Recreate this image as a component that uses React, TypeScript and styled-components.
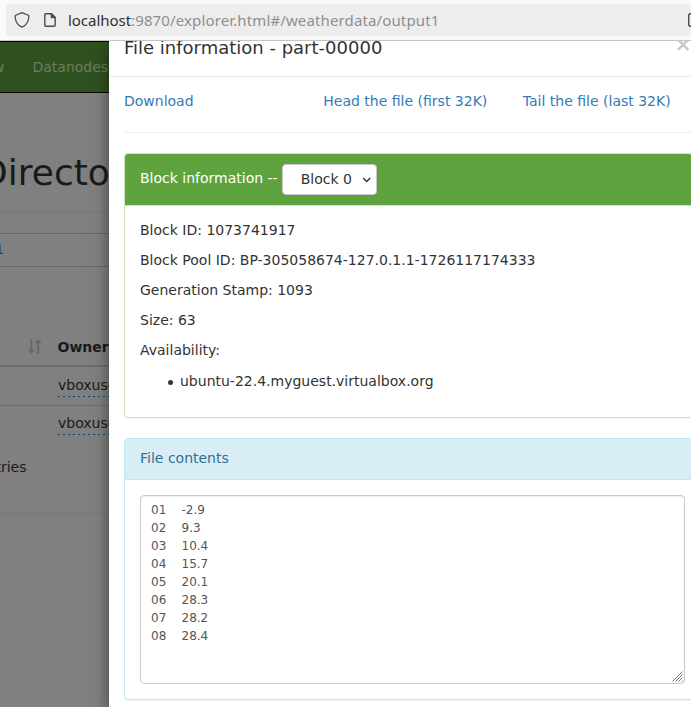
import React from "react";
import styled, { createGlobalStyle } from "styled-components";

const GlobalStyle = createGlobalStyle`
  * { box-sizing: border-box; }
  body {
    margin: 0;
    overflow: hidden;
    font: 14px/20px "DejaVu Sans", sans-serif;
    color: #333;
    background: #fff;
  }
`;

const Window = styled.div`
  width: 691px;
  height: 707px;
  display: flex;
  flex-direction: column;
  overflow: hidden;
`;

const Toolbar = styled.header`
  flex: 0 0 41px;
  height: 41px;
  padding: 4px 0 4px 6px;
  background: #fafafa;
  border-bottom: 1px solid #c3c3c3;
`;

const AddressBar = styled.div`
  height: 32px;
  padding-left: 8px;
  display: flex;
  align-items: center;
  background: #ededed;
  border-radius: 4px 0 0 4px;
  overflow: hidden;
  svg { flex: none; }
`;

const SiteIcons = styled.div`
  display: flex;
  flex: none;
  align-items: center;
  gap: 14px;
`;

const Url = styled.div`
  width: 620px;
  margin: 0 0 0 12px;
  flex: none;
  font: 15px/20px "Noto Sans", sans-serif;
  letter-spacing: 0.13px;
  white-space: nowrap;
  color: #8f8f8f;
  b { font-weight: 400; color: #303030; letter-spacing: -0.04px; }
`;

const Viewport = styled.main`
  flex: 1;
  min-height: 0;
  display: flex;
  overflow: hidden;
`;

const Page = styled.div`
  flex: 0 0 109px;
  background: #808080;
  color: #1a1a1a;
  overflow: hidden;
  white-space: nowrap;
`;

const Nav = styled.nav`
  height: 52px;
  display: flex;
  gap: 28px;
  line-height: 50px;
  color: #6b7d62;
  background: #2f511f;
  border: solid #050505;
  border-width: 1px 0;
`;

const Clipped = styled.span<{ $shift: number }>`
  display: block;
  margin-left: ${(p) => p.$shift}px;
`;

const Title = styled.h1`
  height: 120px;
  margin: 0;
  padding-top: 60px;
  font-size: 36px;
  font-weight: 400;
  line-height: 40px;
  border-bottom: 1px solid #777;
`;

const PathInput = styled.div`
  height: 34px;
  margin-top: 20px;
  line-height: 30px;
  color: #1e3a5c;
  border: solid #666;
  border-width: 1px 0;
`;

const TableHead = styled.div`
  height: 100px;
  padding: 0 0 8px 28px;
  display: flex;
  align-items: flex-end;
  gap: 15.5px;
  font-weight: 700;
  border-bottom: 2px solid #6e6e6e;
  svg { margin-bottom: 3px; }
`;

const TableRow = styled.div<{ $last?: boolean }>`
  height: ${(p) => (p.$last ? 37 : 39)}px;
  padding: ${(p) => (p.$last ? 7 : 8)}px 0 0 58px;
  border-bottom: ${(p) => (p.$last ? 0 : 1)}px solid #6e6e6e;
`;

const Editable = styled.span`
  display: inline-block;
  height: 22px;
  background: repeating-linear-gradient(90deg, #00496b 0 2px, transparent 2px 5px) left bottom / 100% 1px no-repeat;
`;

const Footer = styled.div`
  height: 71px;
  padding-top: 14px;
  border-bottom: 1px solid #777;
`;

const Modal = styled.section`
  flex: 1;
  min-width: 0;
  z-index: 1;
  overflow: hidden;
  background: #fff;
  box-shadow: 0 5px 15px rgba(0, 0, 0, 0.5);
`;

const ModalHeader = styled.div`
  height: 36px;
  padding: 0 1px 0 15px;
  display: flex;
  justify-content: space-between;
  border-bottom: 1px solid #e5e5e5;
  svg { flex: none; }
`;

const ModalTitle = styled.h4`
  margin: -6px 0 0;
  font-size: 18px;
  font-weight: 400;
  line-height: 26px;
`;

const ModalBody = styled.div`
  width: 584px;
  padding: 0 0 0 15px;
`;

const Links = styled.div`
  height: 56px;
  padding-top: 14px;
  display: flex;
  border-bottom: 1px solid #eee;
`;

const Link = styled.a<{ $w: number }>`
  width: ${(p) => p.$w}px;
  flex: none;
  color: #337ab7;
`;

const Panel = styled.section<{ $edge: string; $h: number }>`
  height: ${(p) => p.$h}px;
  margin-top: 20px;
  border: 1px solid ${(p) => p.$edge};
  border-radius: 4px;
  box-shadow: 0 1px 1px rgba(0, 0, 0, 0.05);
  overflow: hidden;
`;

const PanelHeading = styled.div<{ $bg: string; $fg: string; $edge: string; $h: number }>`
  height: ${(p) => p.$h}px;
  padding: 10px 15px;
  display: flex;
  align-items: flex-start;
  gap: 4px;
  color: ${(p) => p.$fg};
  background: ${(p) => p.$bg};
  border-bottom: 1px solid ${(p) => p.$edge};
`;

const HeadingText = styled.span<{ $shift: number }>`
  margin-top: ${(p) => p.$shift}px;
`;

const Select = styled.div`
  width: 95px;
  height: 31px;
  padding: 0 5px 1px 18px;
  display: flex;
  align-items: center;
  justify-content: space-between;
  line-height: 18px;
  color: #333;
  background: #fff;
  border: 1px solid #c8c8cd;
  border-radius: 4px;
  svg { margin-top: 2px; }
`;

const PanelBody = styled.div<{ $top?: number }>`
  padding: ${(p) => p.$top ?? 15}px 15px 15px;
`;

const Line = styled.p`
  margin: 0 0 10px;
`;

const List = styled.ul`
  margin: 0;
  padding: 1px 0 0 28px;
  list-style: none;
  li { display: flex; align-items: center; gap: 7px; }
  li::before {
    content: "";
    width: 5px;
    height: 5px;
    margin-top: 2px;
    border-radius: 50%;
    background: #333;
  }
`;

const Contents = styled.div`
  width: 545px;
  height: 189px;
  padding: 5px 10px;
  display: flex;
  justify-content: space-between;
  font-size: 12px;
  line-height: 18px;
  color: #555;
  border: 1px solid #c9c9c9;
  border-radius: 4px;
  box-shadow: inset 0 1px 1px rgba(0, 0, 0, 0.075);
  svg { align-self: flex-end; margin: 0 -9px -4px 0; }
`;

const Records = styled.div`
  display: grid;
  grid-template-columns: 30.5px auto;
  grid-auto-rows: 18px;
`;

const records = [
  ["01", "-2.9"],
  ["02", "9.3"],
  ["03", "10.4"],
  ["04", "15.7"],
  ["05", "20.1"],
  ["06", "28.3"],
  ["07", "28.2"],
  ["08", "28.4"],
];

const ShieldIcon = () => (
  <svg width="16" height="16" viewBox="0 0 16 16" fill="none" stroke="#4d4d4d" strokeWidth="1.3" strokeLinejoin="round">
    <path d="M8 .7 14.8 3.5C15 9 12.8 12.9 8 15.2 3.2 12.9 1 9 1.2 3.5Z" />
  </svg>
);

const PageIcon = () => (
  <svg width="12" height="14" viewBox="0 0 12 14" fill="none" stroke="#4d4d4d" strokeWidth="1.4" strokeLinejoin="round">
    <path d="M1.8.8H7.4L11.2 4.6v7.6q0 1-1 1H1.8q-1 0-1-1V1.8q0-1 1-1Z" />
    <path d="M7.4.8V4.6h3.8Z" fill="#4d4d4d" />
  </svg>
);

const ReaderIcon = () => (
  <svg width="14" height="14" viewBox="0 0 14 14" fill="none" stroke="#4d4d4d" strokeWidth="1.4">
    <rect x=".7" y=".7" width="12.6" height="12.6" rx="1.5" />
  </svg>
);

const SortIcon = () => (
  <svg width="14" height="15" viewBox="0 0 14 15" fill="#666">
    <path d="M2.4 0h1.9v10.7H7L3.4 14.7-.2 10.7h2.6ZM9.2 14.7h1.9V4h2.6L10.2 0 6.5 4h2.7Z" />
  </svg>
);

const CloseIcon = () => (
  <svg width="14" height="14" viewBox="0 0 14 14" fill="none" stroke="#c8c8c8" strokeWidth="2.5">
    <path d="M2-1.5 12.2 8.8M12.2-1.5 2 8.8" />
  </svg>
);

const Chevron = () => (
  <svg width="9" height="6" viewBox="0 0 9 6" fill="none" stroke="#333" strokeWidth="1.5">
    <path d="m1.2 1 3.5 3.5L8.2 1" />
  </svg>
);

const ResizeGrip = () => (
  <svg width="11" height="11" viewBox="0 0 11 11" fill="none" stroke="#777" strokeWidth="1">
    <path d="M.5 10.5l10-10M3.5 10.5l7-7M6.5 10.5l4-4M9.5 10.5l1-1" />
  </svg>
);

export default function App() {
  return (
    <>
      <GlobalStyle />
      <Window>
        <Toolbar>
          <AddressBar>
            <SiteIcons>
              <ShieldIcon />
              <PageIcon />
            </SiteIcons>
            <Url><b>localhost</b>:9870/explorer.html#/weatherdata/output1</Url>
            <ReaderIcon />
          </AddressBar>
        </Toolbar>
        <Viewport>
          <Page>
            <Nav>
              <Clipped $shift={-7}>w</Clipped>
              <span>Datanodes</span>
            </Nav>
            <Title><Clipped $shift={-20}>Directory</Clipped></Title>
            <PathInput><Clipped $shift={-5}>1</Clipped></PathInput>
            <TableHead><SortIcon />Owner</TableHead>
            <TableRow><Editable>vboxuser</Editable></TableRow>
            <TableRow $last><Editable>vboxuser</Editable></TableRow>
            <Footer><Clipped $shift={-22}>entries</Clipped></Footer>
          </Page>
          <Modal>
            <ModalHeader>
              <ModalTitle>File information - part-00000</ModalTitle>
              <CloseIcon />
            </ModalHeader>
            <ModalBody>
              <Links>
                <Link $w={199.3}>Download</Link>
                <Link $w={199.5}>Head the file (first 32K)</Link>
                <Link $w={160}>Tail the file (last 32K)</Link>
              </Links>
              <Panel $edge="#d0e6c2" $h={265}>
                <PanelHeading $bg="#5fa33e" $fg="#fff" $edge="#d0e6c2" $h={52}>
                  <HeadingText $shift={4}>Block information --</HeadingText>
                  <Select>Block 0<Chevron /></Select>
                </PanelHeading>
                <PanelBody $top={14}>
                  <Line>Block ID: 1073741917</Line>
                  <Line>Block Pool ID: BP-305058674-127.0.1.1-1726117174333</Line>
                  <Line>Generation Stamp: 1093</Line>
                  <Line>Size: 63</Line>
                  <Line>Availability:</Line>
                  <List><li>ubuntu-22.4.myguest.virtualbox.org</li></List>
                </PanelBody>
              </Panel>
              <Panel $edge="#bce8f1" $h={262}>
                <PanelHeading $bg="#d9edf7" $fg="#31708f" $edge="#bce8f1" $h={41}>
                  <HeadingText $shift={-1}>File contents</HeadingText>
                </PanelHeading>
                <PanelBody>
                  <Contents>
                    <Records>
                      {records.map(([key, value]) => (
                        <React.Fragment key={key}>
                          <span>{key}</span>
                          <span>{value}</span>
                        </React.Fragment>
                      ))}
                    </Records>
                    <ResizeGrip />
                  </Contents>
                </PanelBody>
              </Panel>
            </ModalBody>
          </Modal>
        </Viewport>
      </Window>
    </>
  );
}
